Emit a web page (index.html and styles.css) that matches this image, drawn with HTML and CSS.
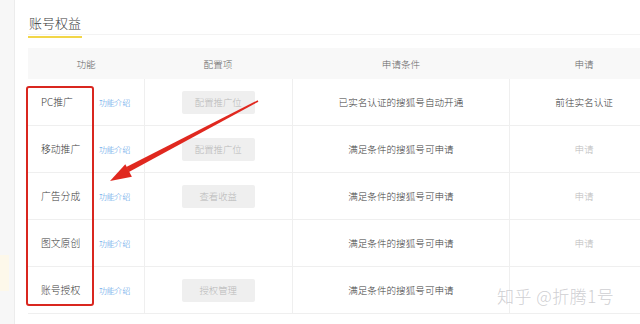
FILE: index.html
```html
<!DOCTYPE html>
<html>
<head>
    <title>账号权益</title>
    <link rel="stylesheet" href="styles.css">
</head>
<body>
    <div class="side">
        <div class="side-mark"></div>
    </div>
    <div class="card">
        <div class="title-bar">
            <span class="title">账号权益</span>
        </div>

        <div class="table">
            <div class="row head">
                <div class="c1">功能</div>
                <div class="c2">配置项</div>
                <div class="c3">申请条件</div>
                <div class="c4">申请</div>
            </div>
            <div class="row">
                <div class="c1"><span class="name">PC推广</span><a class="link">功能介绍</a></div>
                <div class="c2"><span class="btn">配置推广位</span></div>
                <div class="c3">已实名认证的搜狐号自动开通</div>
                <div class="c4">前往实名认证</div>
            </div>
            <div class="row">
                <div class="c1"><span class="name">移动推广</span><a class="link">功能介绍</a></div>
                <div class="c2"><span class="btn">配置推广位</span></div>
                <div class="c3">满足条件的搜狐号可申请</div>
                <div class="c4 off">申请</div>
            </div>
            <div class="row">
                <div class="c1"><span class="name">广告分成</span><a class="link">功能介绍</a></div>
                <div class="c2"><span class="btn">查看收益</span></div>
                <div class="c3">满足条件的搜狐号可申请</div>
                <div class="c4 off">申请</div>
            </div>
            <div class="row">
                <div class="c1"><span class="name">图文原创</span><a class="link">功能介绍</a></div>
                <div class="c2"></div>
                <div class="c3">满足条件的搜狐号可申请</div>
                <div class="c4 off">申请</div>
            </div>
            <div class="row">
                <div class="c1"><span class="name">账号授权</span><a class="link">功能介绍</a></div>
                <div class="c2"><span class="btn">授权管理</span></div>
                <div class="c3">满足条件的搜狐号可申请</div>
                <div class="c4"></div>
            </div>
        </div>
    </div>

    <!-- annotations drawn on top of the screenshot -->
    <div class="red-box"></div>
    <svg class="arrow" width="640" height="324" viewBox="0 0 640 324">
        <polygon points="258.4,101.7 257.6,100.3 126.3,166.9 128.9,172.1" fill="#e0281f"/>
        <polygon points="110,181 125.3,164.3 131.9,176.7" fill="#e0281f"/>
    </svg>
    <div class="watermark">知乎 @折腾1号</div>
</body>
</html>
```

FILE: styles.css
```css
body {
    margin: 0;
    width: 640px;
    height: 324px;
    overflow: hidden;
    display: flex;
    background: #f7f7f7;
    font-family: "Noto Sans CJK SC", "Noto Sans", sans-serif;
    font-weight: 300;
    color: #3a3a3a;
    position: relative;
}
.side {
    width: 14px;
    flex: none;
    padding-top: 255px;
}
.side-mark {
    width: 9px;
    height: 36px;
    background: #fdf8ea;
}
.card {
    flex: 1;
    background: #fff;
    border-left: 1px solid #ececec;
    padding-left: 13px;
    overflow: hidden;
}
.title-bar {
    margin-top: 9px;
    border-bottom: 1px solid #f3f3f3;
    height: 25px;
}
.title {
    display: inline-block;
    font-size: 13px;
    line-height: 20px;
    padding: 0 1px 3px;
    border-bottom: 2px solid #f2d649;
}
.table {
    margin-top: 13px;
    width: 630px;
}
.row {
    display: flex;
    height: 46px;
    border-bottom: 1px solid #efefef;
    font-size: 9.6px;
}
.row.head {
    height: 31px;
    background: #f8f8f8;
    border-bottom: none;
    color: #666;
}
.row > div {
    display: flex;
    align-items: center;
    justify-content: center;
}
.c1 { width: 116px; }
.c2 { width: 148px; }
.c3 { width: 218px; }
.c4 { width: 148px; }
.row:not(.head) .c1 {
    justify-content: flex-start;
    padding-left: 13px;
    width: 103px;
    border-right: 1px solid #efefef;
}
.row:not(.head) .c2 {
    width: 147px;
    border-right: 1px solid #efefef;
}
.row:not(.head) .c3 {
    width: 217px;
    border-right: 1px solid #efefef;
}
.name {
    width: 58px;
    font-size: 9.8px;
}
.link {
    color: #4b97e6;
    font-size: 7.8px;
}
.btn {
    display: inline-flex;
    align-items: center;
    justify-content: center;
    width: 73px;
    height: 23px;
    background: #efefef;
    color: #b8b8b8;
    border-radius: 2px;
    font-size: 9.4px;
}
.off {
    color: #bbb;
}
.red-box {
    position: absolute;
    left: 26px;
    top: 86px;
    width: 64px;
    height: 216px;
    border: 2px solid #d9261f;
    border-radius: 3px;
}
.arrow {
    position: absolute;
    left: 0;
    top: 0;
}
.watermark {
    position: absolute;
    left: 497px;
    top: 284px;
    font-size: 17px;
    line-height: 24px;
    font-weight: 300;
    color: rgba(190, 190, 195, 0.75);
    text-shadow: 1px 1px 0 rgba(255, 255, 255, 0.7);
    letter-spacing: 0.5px;
}
```
